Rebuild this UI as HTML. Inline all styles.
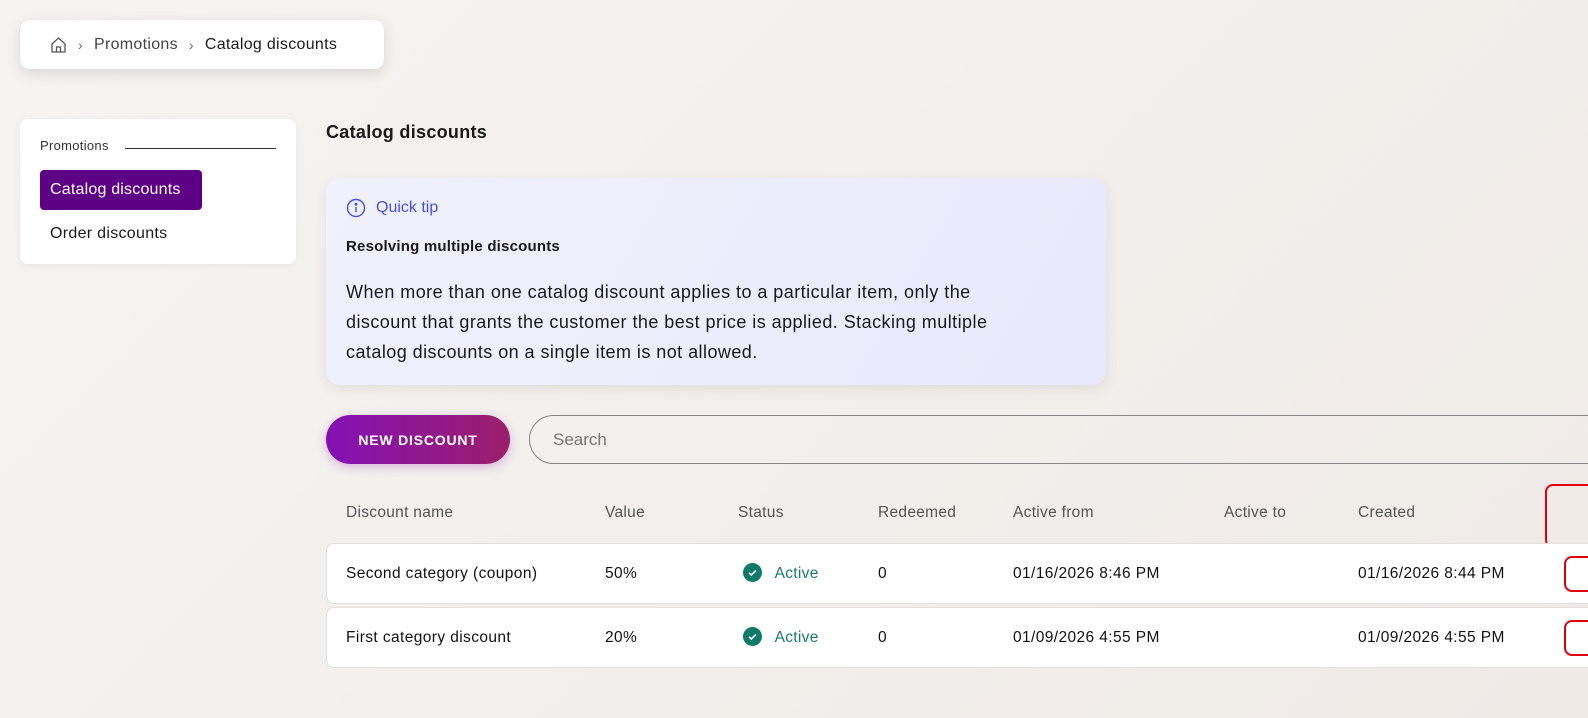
<!DOCTYPE html>
<html><head><meta charset="utf-8"><style>
*{box-sizing:border-box;margin:0;padding:0}
body{width:1588px;height:718px;overflow:hidden;background:linear-gradient(135deg,#f6f4f2,#efeae6);font-family:"Liberation Sans",sans-serif;color:#1a1a1a;position:relative}
.abs{position:absolute}
.bc{left:20px;top:20px;width:364px;height:49px;background:#fff;border-radius:10px;box-shadow:0 4px 14px rgba(0,0,0,.12);display:flex;align-items:center;padding-left:30px;font-size:16px;letter-spacing:.3px}
.bc .sep{color:#666;margin:0 11px;font-size:14px}
.side{left:20px;top:119px;width:276px;height:145px;background:#fff;border-radius:8px;box-shadow:0 2px 8px rgba(0,0,0,.05)}
.tip{left:326px;top:178px;width:780px;height:207px;border-radius:14px;background:linear-gradient(120deg,#f0f1fd,#e9e8fb);box-shadow:0 4px 14px rgba(0,0,0,.08)}
.btn{left:326px;top:415px;width:184px;height:49px;border-radius:25px;background:linear-gradient(90deg,#8410b6,#9c1f6a);color:#fff;font-weight:bold;font-size:14px;letter-spacing:.8px;display:flex;align-items:center;justify-content:center;box-shadow:0 3px 10px rgba(150,40,180,.3)}
.search{left:529px;top:415px;width:1100px;height:49px;border:1px solid #888;border-radius:25px;padding-left:23px;display:flex;align-items:center;color:#777;font-size:17px}
.th{top:504px;font-size:15.5px;color:#555;letter-spacing:.3px}
.row{left:326px;width:1300px;height:61px;background:#fff;border:1px solid #e3dfdc;border-radius:8px}
.cell{font-size:15.5px;color:#111;letter-spacing:.4px}
.act{color:#1a7a6a;font-size:15.5px;letter-spacing:.3px}
.chk{width:19px;height:19px;border-radius:50%;background:#0f7a67;display:inline-block;vertical-align:middle;margin-top:-3px}
.red{border:2px solid #e0000a;border-radius:8px}
</style></head><body>
<div class="abs bc">
<svg width="17" height="17" viewBox="0 0 17 17" fill="none" stroke="#555" stroke-width="1.3"><path d="M2 8L8.5 2L15 8V16H2Z"/><path d="M6.5 16V11H10.5V16"/></svg>
<span class="sep">›</span><span style="color:#444">Promotions</span><span class="sep">›</span><span>Catalog discounts</span></div>

<div class="abs side">
<div class="abs" style="left:20px;top:19px;font-size:13px;color:#333;letter-spacing:.3px">Promotions</div>
<div class="abs" style="left:105px;top:29px;width:151px;height:1px;background:#333"></div>
<div class="abs" style="left:20px;top:51px;width:162px;height:40px;background:#5e0085;border-radius:4px;color:#fff;font-size:16px;display:flex;align-items:center;padding-left:10px;letter-spacing:.2px">Catalog discounts</div>
<div class="abs" style="left:30px;top:106px;font-size:16px;letter-spacing:.3px">Order discounts</div>
</div>

<div class="abs" style="left:326px;top:122px;font-size:18px;font-weight:bold;letter-spacing:.3px">Catalog discounts</div>

<div class="abs tip">
<div class="abs" style="left:20px;top:20px;display:flex;align-items:center;color:#4a4ee8;font-size:16px">
<svg width="20" height="20" viewBox="0 0 20 20" fill="none" stroke="#4a4ee8" stroke-width="1.4"><circle cx="10" cy="10" r="8.5"/><path d="M10 9v5"/><circle cx="10" cy="6.2" r=".8" fill="#4a4ee8"/></svg>
<span style="margin-left:10px">Quick tip</span></div>
<div class="abs" style="left:20px;top:60px;font-size:15px;font-weight:bold;letter-spacing:.2px">Resolving multiple discounts</div>
<div class="abs" style="left:20px;top:99px;width:690px;font-size:18px;line-height:30px;letter-spacing:.45px">When more than one catalog discount applies to a particular item, only the discount that grants the customer the best price is applied. Stacking multiple catalog discounts on a single item is not allowed.</div>
</div>

<div class="abs btn">NEW DISCOUNT</div>
<div class="abs search">Search</div>

<div class="abs th" style="left:346px">Discount name</div>
<div class="abs th" style="left:605px">Value</div>
<div class="abs th" style="left:738px">Status</div>
<div class="abs th" style="left:878px">Redeemed</div>
<div class="abs th" style="left:1013px">Active from</div>
<div class="abs th" style="left:1224px">Active to</div>
<div class="abs th" style="left:1358px">Created</div>
<div class="abs red" style="left:1545px;top:484px;width:60px;height:64px"></div>

<div class="abs row" style="top:543px"></div>
<div class="abs row" style="top:607px"></div>

<div class="abs cell" style="left:346px;top:565px">Second category (coupon)</div>
<div class="abs cell" style="left:605px;top:565px">50%</div>
<div class="abs act" style="left:743px;top:565px"><span class="chk"><svg width="19" height="19" viewBox="0 0 19 19" fill="none" stroke="#fff" stroke-width="1.6"><path d="M6 9.8l2.3 2.2 4.6-4.6"/></svg></span> <span style="margin-left:8px">Active</span></div>
<div class="abs cell" style="left:878px;top:565px">0</div>
<div class="abs cell" style="left:1013px;top:565px">01/16/2026 8:46 PM</div>
<div class="abs cell" style="left:1358px;top:565px">01/16/2026 8:44 PM</div>
<div class="abs red" style="left:1564px;top:556px;width:40px;height:36px"></div>

<div class="abs cell" style="left:346px;top:629px">First category discount</div>
<div class="abs cell" style="left:605px;top:629px">20%</div>
<div class="abs act" style="left:743px;top:629px"><span class="chk"><svg width="19" height="19" viewBox="0 0 19 19" fill="none" stroke="#fff" stroke-width="1.6"><path d="M6 9.8l2.3 2.2 4.6-4.6"/></svg></span> <span style="margin-left:8px">Active</span></div>
<div class="abs cell" style="left:878px;top:629px">0</div>
<div class="abs cell" style="left:1013px;top:629px">01/09/2026 4:55 PM</div>
<div class="abs cell" style="left:1358px;top:629px">01/09/2026 4:55 PM</div>
<div class="abs red" style="left:1564px;top:620px;width:40px;height:36px"></div>
</body></html>
